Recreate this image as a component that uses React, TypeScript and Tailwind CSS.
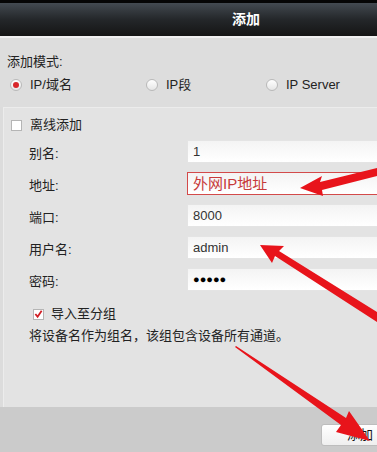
import React from 'react';

const FONT = { fontFamily: '"Liberation Sans", "Noto Sans CJK SC", sans-serif' };

function Radio({ checked }: { checked?: boolean }) {
  return (
    <span className="flex h-[12px] w-[12px] items-center justify-center rounded-full border border-[#b9b9b9] bg-gradient-to-b from-[#ffffff] to-[#e6e6e6]">
      {checked && <span className="h-[6px] w-[6px] rounded-full bg-[#d8262a]" />}
    </span>
  );
}

function Check({ checked }: { checked?: boolean }) {
  return (
    <span className="flex h-[11px] w-[11px] items-center justify-center border border-[#b5b5b5] bg-white">
      {checked && (
        <svg viewBox="0 0 10 10" className="h-[10px] w-[10px]">
          <path d="M1.5 5 L4 8 L8.5 1.5" fill="none" stroke="#d01f25" strokeWidth="2" />
        </svg>
      )}
    </span>
  );
}

function Row({ label, children, warn }: { label: string; children: React.ReactNode; warn?: boolean }) {
  return (
    <div className="flex h-[32px] items-start">
      <div className="w-[183px] pl-[25px] pt-[4px] text-[13px] text-[#222]">{label}:</div>
      <div
        className={`flex h-[23px] w-[300px] items-center bg-gradient-to-b from-[#f4f4f4] to-white px-[5px] ${
          warn ? 'border border-[#d34a4a]' : 'border border-[#e4e4e4]'
        }`}
      >
        {children}
      </div>
    </div>
  );
}

export default function App() {
  return (
    <div className="relative h-[452px] w-[377px] overflow-hidden bg-[#dcdcdc]" style={FONT}>
      <div className="w-[492px]">
        {/* title bar */}
        <div className="h-[3px] bg-[#050505]" />
        <div className="flex h-[33px] items-center justify-center bg-gradient-to-b from-[#434a51] via-[#24272a] to-[#151515] text-[14px] font-bold text-white">
          添加
        </div>
        <div className="h-[2px] bg-[#f0f0f0]" />

        {/* mode */}
        <div className="h-[69px] bg-[#dddddd]">
          <div className="pl-[7px] pt-[15px] text-[13px] leading-[18px] text-[#222]">添加模式:</div>
          <div className="mt-[5px] flex h-[18px] items-center text-[13px] text-[#222]">
            <div className="flex w-[146px] items-center pl-[10px]">
              <Radio checked />
              <span className="ml-[8px]">IP/域名</span>
            </div>
            <div className="flex w-[120px] items-center">
              <Radio />
              <span className="ml-[8px]">IP段</span>
            </div>
            <div className="flex items-center">
              <Radio />
              <span className="ml-[8px]">IP Server</span>
            </div>
          </div>
        </div>

        {/* form panel */}
        <div className="ml-[3px] h-[300px] border-l border-t border-[#ececec] bg-[#e3e3e3]">
          <div className="flex h-[32px] items-center pl-[7px] pt-[2px] text-[13px] text-[#222]">
            <Check />
            <span className="ml-[8px]">离线添加</span>
          </div>
          <Row label="别名">
            <span className="text-[13px] text-[#333]">1</span>
          </Row>
          <Row label="地址" warn>
            <span className="text-[15px] leading-none text-[#c73a3a]">外网IP地址</span>
          </Row>
          <Row label="端口">
            <span className="text-[13px] text-[#333]">8000</span>
          </Row>
          <Row label="用户名">
            <span className="text-[13px] text-[#333]">admin</span>
          </Row>
          <Row label="密码">
            <span className="text-[11px] text-black">●●●●●</span>
          </Row>
          <div className="mt-[6px] flex h-[16px] items-center pl-[29px] text-[13px] text-[#222]">
            <Check checked />
            <span className="ml-[7px]">导入至分组</span>
          </div>
          <div className="mt-[5px] pl-[25px] text-[13px] leading-[18px] text-[#222]">将设备名作为组名，该组包含设备所有通道。</div>
        </div>

        {/* footer */}
        <div className="flex h-[45px] items-start bg-[#cbcbcb] pl-[321px] pt-[17px]">
          <div className="flex h-[22px] w-[80px] items-center rounded-[3px] border border-[#bdbdbd] bg-gradient-to-b from-white to-[#efefef] pl-[25px] text-[13px] text-[#111]">
            添加
          </div>
        </div>
      </div>

      {/* red annotation arrows */}
      <svg className="pointer-events-none absolute left-0 top-0" width="377" height="452" viewBox="0 0 377 452">
        <polygon points="300,188 322,176 320,182 377,168 377,176 322,190 323,196" fill="#e8141b" />
        <polygon points="260,245 284,246 279,251 377,312 377,322 275,256 272,263" fill="#e8141b" />
        <polygon points="235,347 236,346 346,418 349,411 370,441 336,432 341,425" fill="#e8141b" />
      </svg>
    </div>
  );
}
